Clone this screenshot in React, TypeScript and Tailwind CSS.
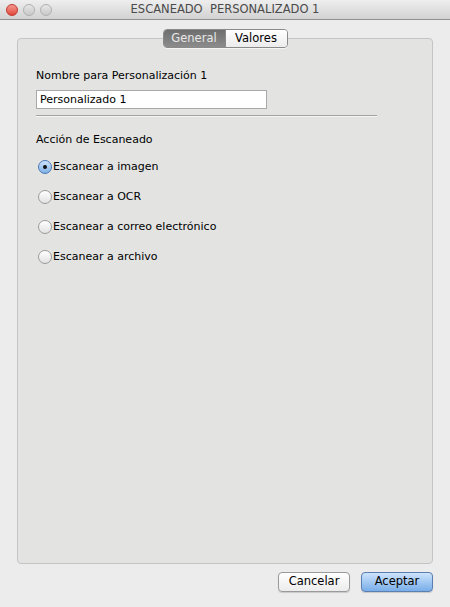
import { useState } from "react";

const font = { fontFamily: '"Lucida Grande", "DejaVu Sans", sans-serif' };

const options = [
  "Escanear a imagen",
  "Escanear a OCR",
  "Escanear a correo electrónico",
  "Escanear a archivo",
];

export default function App() {
  const [tab, setTab] = useState<"general" | "valores">("general");
  const [action, setAction] = useState(0);
  const [name, setName] = useState("Personalizado 1");

  return (
    <div
      className="w-[450px] h-[607px] bg-[#ececec] flex flex-col overflow-hidden text-[11px] text-black"
      style={font}
    >
      {/* Title bar */}
      <div className="h-[20px] shrink-0 relative flex items-center justify-center bg-gradient-to-b from-[#eeeeee] to-[#d2d2d2] border-b border-[#8f8f8f]">
        <div className="absolute left-[6px] top-[4px] flex gap-[5px]">
          <span className="w-[12px] h-[12px] rounded-full bg-gradient-to-b from-[#f49a90] to-[#e0443a] border border-[#c0392f]" />
          <span className="w-[12px] h-[12px] rounded-full bg-gradient-to-b from-[#e6e6e6] to-[#c9c9c9] border border-[#b0b0b0]" />
          <span className="w-[12px] h-[12px] rounded-full bg-gradient-to-b from-[#e6e6e6] to-[#c9c9c9] border border-[#b0b0b0]" />
        </div>
        <span className="text-[11.5px] text-[#4a4a4a] whitespace-pre">ESCANEADO  PERSONALIZADO 1</span>
      </div>

      {/* Content */}
      <div className="flex-1 flex flex-col px-[17px] pt-[9px] pb-[15px]">
        <div className="relative flex-1 flex flex-col">
          {/* Tabs */}
          <div className="relative z-10 flex justify-center">
            <div className="flex h-[19px] rounded-[4px] border border-[#8a8a8a] overflow-hidden shadow-[0_1px_0_rgba(255,255,255,0.6)]">
              <button
                type="button"
                onClick={() => setTab("general")}
                className={`w-[62px] text-[11.5px] leading-none border-r border-[#8a8a8a] ${
                  tab === "general"
                    ? "bg-gradient-to-b from-[#6e6e6e] to-[#8c8c8c] text-[#e8e8e8]"
                    : "bg-gradient-to-b from-white to-[#ececec] text-black"
                }`}
              >
                General
              </button>
              <button
                type="button"
                onClick={() => setTab("valores")}
                className={`w-[61px] text-[11.5px] leading-none ${
                  tab === "valores"
                    ? "bg-gradient-to-b from-[#6e6e6e] to-[#8c8c8c] text-[#e8e8e8]"
                    : "bg-gradient-to-b from-white to-[#ececec] text-black"
                }`}
              >
                Valores
              </button>
            </div>
          </div>

          {/* Panel */}
          <div className="-mt-[10px] flex-1 rounded-[4px] border border-[#c4c4c4] bg-[#e3e4e2] pt-[29px] px-[18px]">
            {tab === "general" ? (
              <>
                <div className="h-[16px] leading-[16px]">Nombre para Personalización 1</div>
                <input
                  value={name}
                  onChange={(e) => setName(e.target.value)}
                  className="mt-[6px] block w-[231px] h-[19px] px-[3px] bg-white border border-[#a9a9a9] text-[11px] outline-none"
                  style={font}
                />
                <div className="mt-[6px] w-[341px] h-[2px] bg-[#a3a5a1] border-b border-[#f5f5f5]" />
                <div className="mt-[15px] h-[16px] leading-[16px]">Acción de Escaneado</div>
                <div className="mt-[12px] flex flex-col gap-[16px]">
                  {options.map((label, i) => (
                    <label
                      key={label}
                      className="flex items-center h-[14px] cursor-default"
                      onClick={() => setAction(i)}
                    >
                      <span
                        className={`ml-[2px] w-[14px] h-[14px] rounded-full border flex items-center justify-center mr-[1px] ${
                          action === i
                            ? "border-[#4a77b5] bg-gradient-to-b from-[#cfe3fa] to-[#7fb0e6]"
                            : "border-[#9b9b9b] bg-gradient-to-b from-[#ffffff] to-[#e2e2e2]"
                        }`}
                      >
                        {action === i && <span className="w-[4px] h-[4px] rounded-full bg-[#111]" />}
                      </span>
                      <span>{label}</span>
                    </label>
                  ))}
                </div>
              </>
            ) : null}
          </div>
        </div>

        {/* Buttons */}
        <div className="mt-[8px] flex justify-end gap-[11px]">
          <button
            type="button"
            className="w-[72px] h-[20px] rounded-[4px] border border-[#9a9a9a] bg-gradient-to-b from-white to-[#ececec] text-[11.5px] shadow-[0_1px_1px_rgba(0,0,0,0.15)]"
          >
            Cancelar
          </button>
          <button
            type="button"
            className="w-[72px] h-[20px] rounded-[4px] border border-[#5a7fb0] bg-gradient-to-b from-[#cde3fb] to-[#78aee9] text-[11.5px] shadow-[0_1px_1px_rgba(0,0,0,0.15)]"
          >
            Aceptar
          </button>
        </div>
      </div>
    </div>
  );
}
